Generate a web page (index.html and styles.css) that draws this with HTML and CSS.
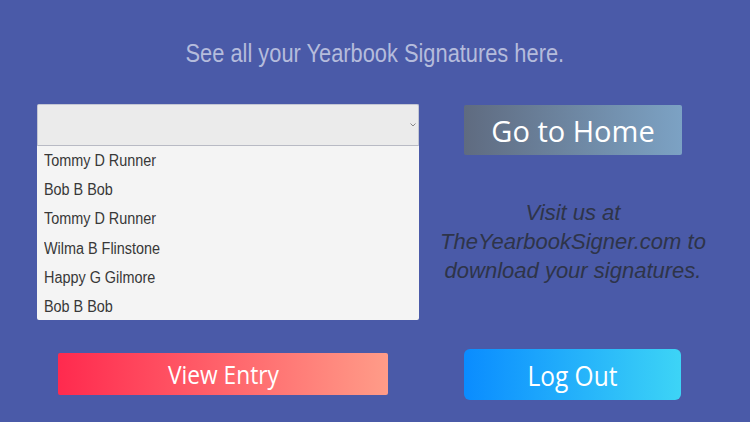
FILE: index.html
```html
<!DOCTYPE html>
<html>
<head>
<meta charset="utf-8">
<link rel="stylesheet" href="styles.css">
</head>
<body>
<div class="page">
  <h1 class="title"><span>See all your Yearbook Signatures here.</span></h1>
  <div class="grid">
    <div class="dropdown">
      <div class="select">
        <svg class="chev" width="6" height="4" viewBox="0 0 6 4"><path d="M0.5 0.5 L3 3 L5.5 0.5" fill="none" stroke="#888" stroke-width="1"/></svg>
      </div>
      <ul class="list">
        <li><span>Tommy D Runner</span></li>
        <li><span>Bob B Bob</span></li>
        <li><span>Tommy D Runner</span></li>
        <li><span>Wilma B Flinstone</span></li>
        <li><span>Happy G Gilmore</span></li>
        <li><span>Bob B Bob</span></li>
      </ul>
    </div>
    <div class="side">
      <button class="btn home"><span>Go to Home</span></button>
      <p class="visit">Visit us at TheYearbookSigner.com to download your signatures.</p>
    </div>
    <div class="cell-left">
      <button class="btn view"><span>View Entry</span></button>
    </div>
    <div class="cell-right">
      <button class="btn logout"><span>Log Out</span></button>
    </div>
  </div>
</div>
</body>
</html>
```
FILE: styles.css
```css
html, body {
  margin: 0;
  padding: 0;
  background: #4a5aa8;
  width: 750px;
  height: 422px;
  overflow: hidden;
}
.page {
  padding-top: 38px;
}
.title {
  margin: 0;
  text-align: center;
  font-family: "Liberation Sans", Arial, sans-serif;
  font-weight: normal;
  font-size: 25px;
  line-height: 30px;
  color: #b5bcdc;
}
.title span {
  display: inline-block;
  transform: scaleX(0.873);
}
.grid {
  margin-top: 36px;
  margin-left: 37px;
  display: grid;
  grid-template-columns: 382px 218px;
  grid-template-rows: 216px auto;
  column-gap: 45px;
}
.dropdown {
  display: flex;
  flex-direction: column;
}
.select {
  height: 40px;
  background: #ebebeb;
  border: 1px solid #c3c6d3;
  border-bottom-color: #b8bac4;
  border-radius: 2px 2px 0 0;
  display: flex;
  justify-content: flex-end;
  align-items: center;
  padding-right: 2px;
}
.chev {
  margin-top: 1px;
}
.list {
  margin: 0;
  padding: 0;
  list-style: none;
  background: #f4f4f4;
  height: 175px;
  overflow: hidden;
  border-radius: 0 0 2px 2px;
}
.list li {
  height: 29.3px;
  line-height: 29.3px;
  padding-left: 7px;
  font-family: "Liberation Sans", Arial, sans-serif;
  font-size: 16px;
  color: #383838;
}
.list li span {
  display: inline-block;
  transform: scaleX(0.9);
  transform-origin: left center;
}
.side {
  display: flex;
  flex-direction: column;
  align-items: center;
}
.btn {
  border: none;
  padding: 0;
  margin: 0;
  display: flex;
  align-items: center;
  justify-content: center;
  font-family: "Open Sans", sans-serif;
  color: #fff;
}
.home {
  width: 218px;
  height: 50px;
  margin-top: 1px;
  border-radius: 2px;
  background: linear-gradient(to right, #5f6b80, #7ca2c4);
  font-size: 29px;
}
.visit {
  margin: 43px 0 0;
  width: 270px;
  text-align: center;
  font-family: "Liberation Sans", Arial, sans-serif;
  font-style: italic;
  font-size: 22px;
  line-height: 29px;
  color: #2e3449;
}
.cell-left, .cell-right {
  display: flex;
  align-items: flex-start;
}
.cell-left {
  padding-left: 21px;
  padding-top: 33px;
}
.cell-right {
  padding-top: 29px;
}
.view {
  width: 330px;
  height: 42px;
  border-radius: 2px;
  background: linear-gradient(to right, #ff2a4e, #ff9c88);
  font-size: 26px;
}
.logout {
  width: 217px;
  height: 51px;
  border-radius: 6px;
  background: linear-gradient(to right, #0a8cff, #3dd4f6);
  font-size: 28px;
}
.view span, .logout span {
  display: inline-block;
  transform: scaleX(0.875);
}
```
